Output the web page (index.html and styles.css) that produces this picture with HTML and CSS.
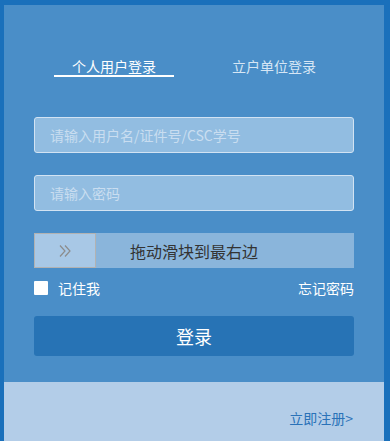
FILE: index.html
```html
<!DOCTYPE html>
<html lang="zh-CN">
<head>
<meta charset="utf-8">
<title>登录</title>
<link rel="stylesheet" href="styles.css">
</head>
<body>
<div class="frame">
  <div class="panel">
    <div class="main">
      <div class="tabs">
        <div class="tab"><span class="tab-label active">个人用户登录</span></div>
        <div class="tab"><span class="tab-label">立户单位登录</span></div>
      </div>
      <input class="field first" type="text" placeholder="请输入用户名/证件号/CSC学号">
      <input class="field" type="password" placeholder="请输入密码">
      <div class="slider">
        <div class="handle">
          <svg width="12" height="14" viewBox="0 0 12 14"><path d="M1 1.5 L6 7 L1 12.5 M6 1.5 L11 7 L6 12.5" fill="none" stroke="#8c8c8c" stroke-width="1.2"/></svg>
        </div>
        <span class="slider-text">拖动滑块到最右边</span>
      </div>
      <div class="options">
        <label class="remember"><span class="box"></span>记住我</label>
        <span class="forgot">忘记密码</span>
      </div>
      <button class="login">登录</button>
    </div>
    <div class="footer">
      <span class="register">立即注册&gt;</span>
    </div>
  </div>
</div>
</body>
</html>
```

FILE: styles.css
```css
html, body {
  margin: 0;
  padding: 0;
}
body {
  background: #1a70bb;
  font-family: "Noto Sans CJK SC", "Noto Sans", sans-serif;
  height: 441px;
  overflow: hidden;
}
.frame {
  padding: 5px 6px 0 4px;
}
.panel {
  background: #4a8ec8;
  width: 380px;
}
.main {
  padding: 54px 30px 26px;
  display: flex;
  flex-direction: column;
}
.tabs {
  display: flex;
}
.tab {
  flex: 1;
  display: flex;
  justify-content: center;
}
.tab-label {
  width: 120px;
  text-align: center;
  font-size: 14px;
  line-height: 14px;
  padding-bottom: 2px;
  color: #d6e6f5;
  border-bottom: 2px solid transparent;
}
.tab-label.active {
  color: #ffffff;
  border-bottom-color: #ffffff;
}
.field {
  box-sizing: border-box;
  height: 36px;
  width: 320px;
  margin: 22px 0 0;
  padding: 0 15px;
  background: #92bde1;
  border: 1px solid #d2e3f3;
  border-radius: 3px;
  font-family: inherit;
  font-size: 14px;
  color: #ffffff;
  outline: none;
}
.field.first {
  margin-top: 40px;
}
.field::placeholder {
  color: #c9ddf0;
}
.slider {
  position: relative;
  margin-top: 22px;
  height: 35px;
  background: #8ab5db;
  display: flex;
  align-items: center;
  justify-content: center;
}
.handle {
  position: absolute;
  left: 0;
  top: 0;
  box-sizing: border-box;
  width: 62px;
  height: 35px;
  background: #a8c8e6;
  border: 1px solid #b2b2b2;
  display: flex;
  align-items: center;
  justify-content: center;
}
.slider-text {
  font-size: 16px;
  color: #333333;
}
.options {
  margin-top: 13px;
  height: 14px;
  display: flex;
  justify-content: space-between;
  align-items: center;
  font-size: 14px;
  color: #ffffff;
}
.remember {
  display: flex;
  align-items: center;
  gap: 10px;
}
.box {
  width: 14px;
  height: 14px;
  background: #ffffff;
  border-radius: 1px;
}
.login {
  margin-top: 21px;
  height: 40px;
  width: 320px;
  border: none;
  border-radius: 3px;
  background: #2773b5;
  color: #ffffff;
  font-family: inherit;
  font-size: 18px;
  padding: 0;
}
.footer {
  background: #b3cde8;
  height: 59px;
  padding: 23px 31px 0 0;
  box-sizing: border-box;
  text-align: right;
}
.register {
  font-size: 14px;
  line-height: 16px;
  color: #2a72b8;
}
```
